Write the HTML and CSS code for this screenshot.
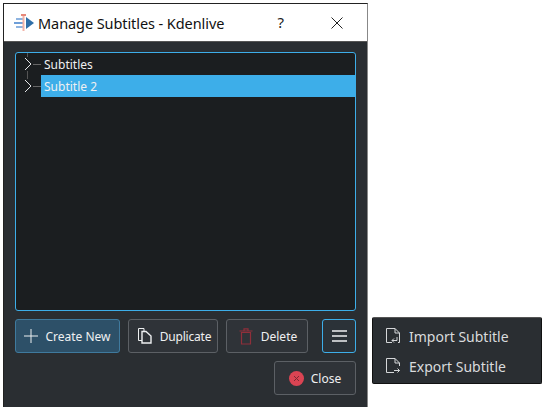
FILE: index.html
```html
<!DOCTYPE html>
<html lang="en">
  <head>
    <meta charset="UTF-8" />
    <title>Manage Subtitles - Kdenlive</title>
    <link rel="stylesheet" href="styles.css">
  </head>
  <body>
    <div class="window">
      <div class="titlebar">
        <svg class="app-icon" width="22" height="18" viewBox="0 0 22 18">
          <rect x="2" y="4" width="8" height="2" fill="#8fb4e0" />
          <rect x="0" y="8" width="10" height="2" fill="#6f9fd8" />
          <rect x="2" y="12" width="8" height="2" fill="#8fb4e0" />
          <rect x="8.5" y="1" width="2" height="16" fill="#f2b3a8" />
          <rect x="7" y="0" width="5" height="2" fill="#e8897a" />
          <path d="M12 3 L20 9 L12 15 Z" fill="#2f6fa8" />
        </svg>
        <span class="title">Manage Subtitles - Kdenlive</span>
        <span class="help">?</span>
        <svg class="close-x" width="12" height="12" viewBox="0 0 12 12">
          <path d="M0.5 0.5 L11.5 11.5 M11.5 0.5 L0.5 11.5" stroke="#222" stroke-width="1" fill="none" />
        </svg>
      </div>
      <div class="content">
        <div class="tree">
          <div class="guide"></div>
          <div class="row">
            <svg class="arrow" width="9" height="14" viewBox="0 0 9 14"><path d="M1 1 L7 7 L1 13" stroke="#e4e6e8" fill="none" /></svg>
            <span class="dash"></span>
            <span class="label">Subtitles</span>
          </div>
          <div class="row">
            <svg class="arrow" width="9" height="14" viewBox="0 0 9 14"><path d="M1 1 L7 7 L1 13" stroke="#e4e6e8" fill="none" /></svg>
            <span class="dash"></span>
            <span class="label selected">Subtitle 2</span>
          </div>
        </div>
        <div class="actions">
          <button class="btn btn-create">
            <svg width="16" height="16" viewBox="0 0 16 16"><path d="M8 1 V15 M1 8 H15" stroke="#eef0f1" fill="none" /></svg>
            Create New
          </button>
          <button class="btn btn-dup">
            <svg width="14" height="16" viewBox="0 0 14 16">
              <path d="M0.5 0.5 H6 V12.5 H0.5 Z" stroke="#eef0f1" fill="none" />
              <path d="M4 3.5 H8 L13 8 V15 H4 Z" stroke="#eef0f1" stroke-width="1.4" fill="#2f3338" />
            </svg>
            Duplicate
          </button>
          <button class="btn btn-del">
            <svg width="14" height="17" viewBox="0 0 14 17">
              <path d="M2.5 4.5 H11.5 V16 H2.5 Z M0.5 3 H13.5 M5 3 V0.8 H9 V3" stroke="#8f2f3a" stroke-width="1.2" fill="none" />
            </svg>
            Delete
          </button>
          <button class="btn btn-menu">
            <svg width="15" height="12" viewBox="0 0 15 12"><path d="M0 1 H15 M0 6 H15 M0 11 H15" stroke="#eef0f1" stroke-width="1.6" fill="none" /></svg>
          </button>
        </div>
        <div class="footer">
          <button class="btn btn-close">
            <svg width="15" height="15" viewBox="0 0 15 15">
              <circle cx="7.5" cy="7.5" r="7.5" fill="#da4453" />
              <path d="M5 5 L10 10 M10 5 L5 10" stroke="#7c2a33" fill="none" />
            </svg>
            Close
          </button>
        </div>
      </div>
    </div>

    <div class="menu">
      <div class="menu-item">
        <svg width="14" height="16" viewBox="0 0 14 16">
          <path d="M6 14.5 H0.5 V0.5 H9 L13.5 5 V14.5 H12 M9 0.5 V5 H13.5" stroke="#d5d7d9" fill="none" />
          <path d="M11 9 V12.5 H6 M8 10.5 L6 12.5 L8 14.5" stroke="#d5d7d9" fill="none" />
        </svg>
        <span>Import Subtitle</span>
      </div>
      <div class="menu-item">
        <svg width="14" height="16" viewBox="0 0 14 16">
          <path d="M13.5 8 V5 L9 0.5 H0.5 V14.5 H8 M9 0.5 V5 H13.5" stroke="#d5d7d9" fill="none" />
          <path d="M8 12.5 H13.5 M11.5 10.5 L13.5 12.5 L11.5 14.5" stroke="#d5d7d9" fill="none" />
        </svg>
        <span>Export Subtitle</span>
      </div>
    </div>
  </body>
</html>
```

FILE: styles.css
```css
body {
  margin: 0;
  width: 546px;
  height: 408px;
  overflow: hidden;
  background: #fff;
  font-family: "Noto Sans", "Open Sans", sans-serif;
}

.window {
  position: absolute;
  top: 3px;
  left: 3px;
  width: 363px;
  height: 403px;
  border: 1px solid #222;
  border-bottom: 0;
  border-right-color: #888;
  display: flex;
  flex-direction: column;
}

.titlebar {
  height: 37px;
  background: #fff;
  display: flex;
  align-items: center;
  padding-left: 10px;
  border-bottom: 1px solid #555;
}

.app-icon {
  margin-right: 2px;
}

.title {
  font-size: 14.5px;
  letter-spacing: -0.08px;
  color: #111;
  flex: 1;
}

.help {
  font-size: 15px;
  color: #222;
  margin-right: 47px;
  position: relative;
  top: -1px;
}

.close-x {
  margin-right: 24px;
}

.content {
  flex: 1;
  background: #2a2e32;
  display: flex;
  flex-direction: column;
  padding: 10px 11px 0 11px;
}

.tree {
  position: relative;
  height: 257px;
  background: #1b1e20;
  border: 1px solid #3daee9;
  border-radius: 3px;
}

.guide {
  position: absolute;
  left: 11px;
  top: 0;
  width: 1px;
  height: 26px;
  background: #555;
}

.row {
  height: 22px;
  display: flex;
  align-items: center;
  padding-left: 8px;
  position: relative;
}

.arrow {
  flex: none;
  background: #1b1e20;
}

.dash {
  width: 8px;
  height: 1px;
  background: #666;
}

.label {
  flex: 1;
  height: 22px;
  line-height: 24px;
  padding-left: 3px;
  font-size: 12px;
  color: #eff0f1;
}

.label.selected {
  background: #3daee9;
}

.actions {
  display: flex;
  margin-top: 8px;
  gap: 8px;
}

.btn {
  height: 34px;
  background: #2f3338;
  border: 1px solid #5c6065;
  border-radius: 3px;
  color: #eff0f1;
  font-family: inherit;
  font-size: 12px;
  padding: 0;
  display: flex;
  align-items: center;
  justify-content: center;
  gap: 6px;
}

.btn-create {
  width: 105px;
  background: #2d5068;
  border-color: #3f7a9e;
  gap: 6px;
  padding-right: 1px;
}

.btn-dup {
  width: 90px;
  gap: 8px;
  padding-left: 3px;
  letter-spacing: -0.2px;
}

.btn-del {
  width: 82px;
  gap: 8px;
  padding-left: 2px;
}

.btn-menu {
  width: 34px;
  margin-left: 6px;
  border-color: #3daee9;
  background: #2b3238;
}

.footer {
  display: flex;
  justify-content: flex-end;
  margin-top: 8px;
}

.btn-close {
  width: 82px;
  gap: 7px;
}

.menu {
  position: absolute;
  top: 317px;
  left: 372px;
  width: 170px;
  height: 67px;
  box-sizing: border-box;
  background: #2a2e32;
  border: 1px solid #111;
  border-top-color: #555;
  border-radius: 2px;
  padding-top: 3px;
}

.menu-item {
  height: 30px;
  display: flex;
  align-items: center;
  padding-left: 13px;
  gap: 9px;
  font-size: 14px;
  color: #d9dbdd;
}
```
